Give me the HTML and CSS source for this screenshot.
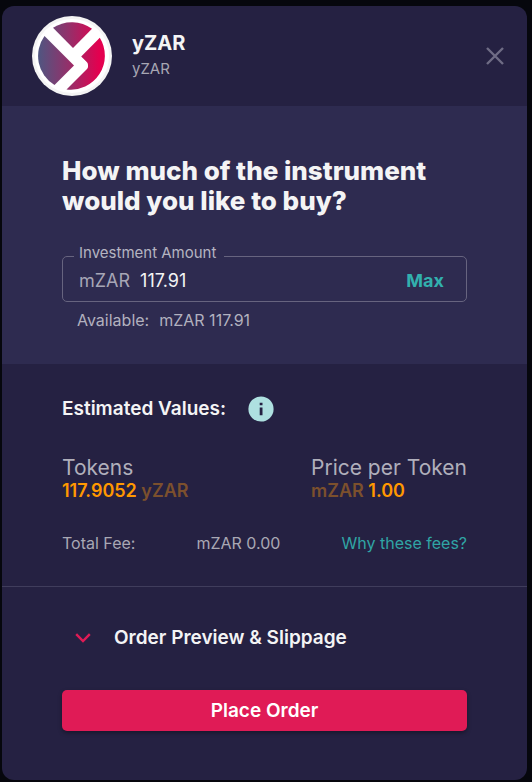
FILE: index.html
```html
<!DOCTYPE html>
<html lang="en">
<head>
<meta charset="utf-8">
<meta name="viewport" content="width=device-width, initial-scale=1">
<title>Buy yZAR</title>
<link rel="stylesheet" href="styles.css">
</head>
<body>
<main class="dialog">
  <header class="header">
    <svg class="logo" viewBox="0 0 80 80" aria-hidden="true">
      <defs>
        <linearGradient id="brand" gradientUnits="userSpaceOnUse" x1="6" y1="0" x2="74" y2="0">
          <stop offset="0" stop-color="#4f5681"/>
          <stop offset="0.45" stop-color="#94306a"/>
          <stop offset="0.9" stop-color="#e4004f"/>
        </linearGradient>
      </defs>
      <circle cx="40" cy="40" r="40" fill="#f4f4f4"/>
      <circle cx="40" cy="40" r="37" fill="#fff"/>
      <g fill="url(#brand)">
        <path d="M21 11.8A34 34 0 0 1 60 12.8L41 32Z"/>
        <path d="M12.5 20L42 49.5L22.5 69A34 34 0 0 1 12.5 20Z"/>
        <path d="M67.8 21.8L49.2 40.5L55 46.3Q56 47.3 56 49V50.5Q56 52 55 53L34.5 73.4A34 34 0 0 0 67.8 21.8Z"/>
      </g>
    </svg>
    <div class="asset">
      <h1 class="asset-name">yZAR</h1>
      <p class="asset-symbol">yZAR</p>
    </div>
    <button class="close" type="button" aria-label="Close">
      <svg viewBox="0 0 20 20" width="20" height="20" aria-hidden="true"><path d="M2 2L18 18M18 2L2 18" fill="none" stroke="currentColor" stroke-width="2.4"/></svg>
    </button>
  </header>

  <section class="amount">
    <h2 class="question">How much of the instrument would you like to buy?</h2>
    <fieldset class="field">
      <legend class="legend"><label for="amount">Investment Amount</label></legend>
      <div class="field-row">
        <span class="prefix">mZAR</span>
        <input class="input" id="amount" type="text" inputmode="decimal" value="117.91">
        <button class="max" type="button">Max</button>
      </div>
    </fieldset>
    <p class="available"><span>Available:</span><span>mZAR 117.91</span></p>
  </section>

  <section class="estimate">
    <div class="estimate-head">
      <h3 class="subtitle">Estimated Values:</h3>
      <svg class="info" viewBox="0 0 26 26" width="26" height="26" aria-hidden="true"><circle cx="13" cy="13" r="12.6" fill="#aee0e0"/><path d="M11.7 6.7h2.8v2.6h-2.8zM11.7 11.5h2.8v7.8h-2.8z" fill="#252142"/></svg>
    </div>
    <div class="values">
      <div>
        <p class="value-label">Tokens</p>
        <p class="value">117.9052 <span class="unit">yZAR</span></p>
      </div>
      <div>
        <p class="value-label">Price per Token</p>
        <p class="value"><span class="unit">mZAR</span> 1.00</p>
      </div>
    </div>
    <div class="fees">
      <span>Total Fee:</span>
      <span>mZAR 0.00</span>
      <a class="fees-link" href="#">Why these fees?</a>
    </div>
  </section>

  <section class="order">
    <button class="preview" type="button">
      <svg viewBox="0 0 16 10" width="16" height="10" aria-hidden="true"><path d="M1.2 1.2L8 8L14.8 1.2" fill="none" stroke="#e01b56" stroke-width="2.4"/></svg>
      <span>Order Preview &amp; Slippage</span>
    </button>
    <button class="submit" type="button">Place Order</button>
  </section>
</main>
</body>
</html>
```

FILE: styles.css
```css
* {
  box-sizing: border-box;
}

body {
  margin: 0;
  min-height: 100vh;
  display: flex;
  padding: 6px 5px 2px 2px;
  background: #06070d;
  color: #f4f4f5;
  font-family: Inter, "Open Sans", sans-serif;
}

h1, h2, h3, p {
  margin: 0;
}

button {
  border: 0;
  padding: 0;
  background: none;
  color: inherit;
  font: inherit;
  cursor: pointer;
}

.dialog {
  flex: 1;
  border-radius: 12px;
  overflow: hidden;
  background: #252142;
}

.header {
  display: flex;
  align-items: center;
  gap: 20px;
  height: 100px;
  padding: 0 22px 2px 30px;
}

.logo {
  width: 80px;
  height: 80px;
  margin-top: 2px;
}

.asset {
  flex: 1;
}

.asset-name {
  font-size: 20px;
  line-height: 28px;
  font-weight: 700;
}

.asset-symbol {
  font-size: 15px;
  line-height: 24px;
  color: #a7a6b3;
}

.close {
  display: flex;
  margin-top: 2px;
  color: #6f6c85;
}

.amount {
  padding: 50px 60px 32px;
  background: #2e2b50;
}

.question {
  font-size: 26px;
  line-height: 30px;
  font-weight: 800;
}

.field {
  min-width: 0;
  margin: 28px 0 0;
  padding: 0 22px 0 11px;
  border: 1px solid #67647f;
  border-radius: 5px;
}

.legend {
  padding: 0 8px 6px 5px;
  font-size: 15px;
  line-height: 18px;
  color: #b5b4c1;
}

.field-row {
  display: flex;
  align-items: center;
  gap: 10px;
  height: 33px;
  padding: 0 0 8px 5px;
  font-size: 18px;
}

.prefix {
  color: #a7a6b6;
}

.input {
  flex: 1;
  min-width: 0;
  border: 0;
  padding: 0;
  background: none;
  color: #f4f4f5;
  font: inherit;
  outline: 0;
}

.max {
  color: #32b0ae;
  font-weight: 700;
}

.available {
  display: flex;
  gap: 10px;
  margin-top: 6px;
  padding-left: 15px;
  font-size: 16px;
  line-height: 24px;
  color: #b2b1bf;
}

.estimate {
  padding: 32px 60px 31px;
  border-bottom: 1px solid #403d5c;
}

.estimate-head {
  display: flex;
  align-items: center;
  gap: 22px;
}

.subtitle {
  font-size: 19px;
  line-height: 26px;
  font-weight: 600;
}

.info {
  display: block;
}

.values {
  display: flex;
  justify-content: space-between;
  margin-top: 33px;
}

.value-label {
  font-size: 21px;
  line-height: 25px;
  color: #b0afbb;
}

.value {
  font-size: 18px;
  line-height: 22px;
  font-weight: 600;
  color: #ff9800;
}

.unit {
  color: #7c502d;
}

.fees {
  display: flex;
  justify-content: space-between;
  margin-top: 29px;
  font-size: 16px;
  line-height: 24px;
  color: #a9a8b4;
}

.fees-link {
  color: #30a5a5;
  text-decoration: none;
}

.order {
  padding: 36px 60px 49px;
}

.preview {
  display: flex;
  align-items: center;
  gap: 23px;
  padding-left: 13px;
  font-size: 19px;
  line-height: 30px;
  font-weight: 600;
}

.submit {
  display: block;
  width: 100%;
  margin-top: 37px;
  border-radius: 5px;
  background: #e01b56;
  box-shadow: 0 2px 4px rgba(0, 0, 0, 0.35);
  color: #fff;
  font-size: 19px;
  line-height: 41px;
  font-weight: 600;
}
```
